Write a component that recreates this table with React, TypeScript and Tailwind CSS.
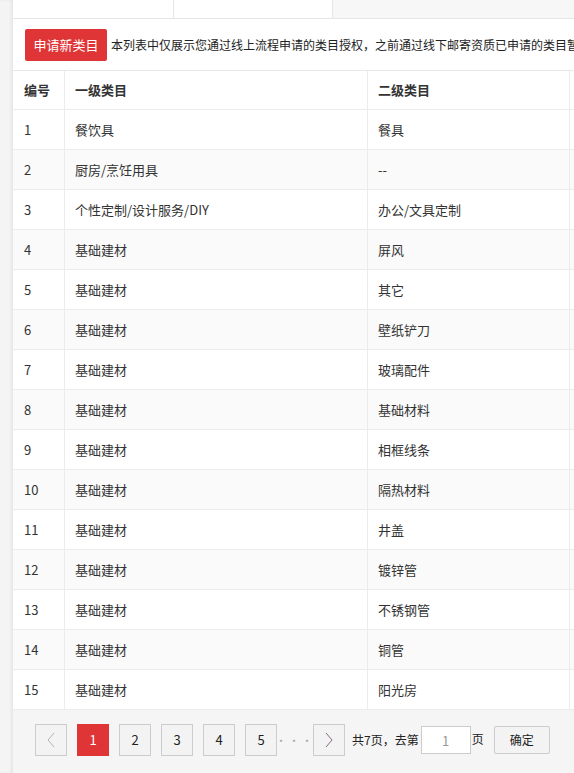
const rows: [number, string, string][] = [
  [1, "餐饮具", "餐具"],
  [2, "厨房/烹饪用具", "--"],
  [3, "个性定制/设计服务/DIY", "办公/文具定制"],
  [4, "基础建材", "屏风"],
  [5, "基础建材", "其它"],
  [6, "基础建材", "壁纸铲刀"],
  [7, "基础建材", "玻璃配件"],
  [8, "基础建材", "基础材料"],
  [9, "基础建材", "相框线条"],
  [10, "基础建材", "隔热材料"],
  [11, "基础建材", "井盖"],
  [12, "基础建材", "镀锌管"],
  [13, "基础建材", "不锈钢管"],
  [14, "基础建材", "铜管"],
  [15, "基础建材", "阳光房"],
];

const Chevron = ({ dir }: { dir: "left" | "right" }) => (
  <svg width="10" height="16" viewBox="0 0 10 16" fill="none">
    <polyline
      points={dir === "left" ? "8,1 2,8 8,15" : "2,1 8,8 2,15"}
      stroke={dir === "left" ? "#b5b5b5" : "#8a6a86"}
      strokeWidth="1"
    />
  </svg>
);

const App = () => {
  return (
    <div
      className="flex w-[574px] h-[773px] overflow-hidden bg-white text-[13px] text-[#333]"
      style={{ fontFamily: '"Noto Sans CJK SC", "Noto Sans", sans-serif' }}
    >
      <div className="w-[13px] shrink-0 bg-[#f4f4f4] shadow-[inset_-2px_0_3px_rgba(0,0,0,0.06)]"></div>
      <div className="flex-1 flex flex-col min-w-0">
        <div className="h-[19px] shrink-0 flex bg-[#f7f7f7] border-b border-[#e6e6e6]">
          <div className="w-[161px] bg-white border-r border-[#e6e6e6]"></div>
          <div className="w-[159px] bg-white border-r border-[#e6e6e6]"></div>
        </div>
        <div className="h-[52px] shrink-0 flex items-center pl-[12px] pt-[1px] gap-[4px] whitespace-nowrap overflow-hidden border-b border-[#e8e8e8]">
          <button className="h-[32px] w-[82px] shrink-0 rounded-[2px] bg-[#e03536] text-white text-[13px]">
            申请新类目
          </button>
          <span className="text-[12px] text-[#222]">
            本列表中仅展示您通过线上流程申请的类目授权，之前通过线下邮寄资质已申请的类目暂不在此展示
          </span>
        </div>
        <div className="flex-1 flex flex-col">
          <div className="flex h-[39px] shrink-0 border-b border-[#ececec] font-bold text-[#333] whitespace-nowrap">
            <div className="w-[52px] shrink-0 pl-[11px] flex items-center border-r border-[#ececec]">编号</div>
            <div className="w-[303px] shrink-0 pl-[10px] flex items-center border-r border-[#ececec]">一级类目</div>
            <div className="w-[202px] shrink-0 pl-[10px] flex items-center border-r border-[#ececec]">二级类目</div>
            <div className="flex-1"></div>
          </div>
          {rows.map(([n, a, b]) => (
            <div
              key={n}
              className={`flex h-[40px] shrink-0 border-b border-[#ececec] whitespace-nowrap ${n % 2 === 0 ? "bg-[#fafafa]" : "bg-white"}`}
            >
              <div className="w-[52px] shrink-0 pl-[11px] flex items-center border-r border-[#ececec]">{n}</div>
              <div className="w-[303px] shrink-0 pl-[10px] flex items-center border-r border-[#ececec]">{a}</div>
              <div className="w-[202px] shrink-0 pl-[10px] flex items-center border-r border-[#ececec]">{b}</div>
              <div className="flex-1"></div>
            </div>
          ))}
          <div className="flex-1 bg-[#f5f5f5] flex items-start pt-[14px] pl-[22px] whitespace-nowrap">
            <button className="w-[32px] h-[32px] border border-[#ccc] bg-[#f3f3f3] flex items-center justify-center">
              <Chevron dir="left" />
            </button>
            <button className="ml-[10px] w-[32px] h-[32px] bg-[#e03536] text-white flex items-center justify-center">1</button>
            {[2, 3, 4, 5].map((p) => (
              <button
                key={p}
                className="ml-[10px] w-[32px] h-[32px] border border-[#ccc] bg-[#f3f3f3] text-[#222] flex items-center justify-center"
              >
                {p}
              </button>
            ))}
            <span className="w-[36px] h-[32px] flex items-center justify-center text-[#aaa] text-[11px] tracking-[2px]">···</span>
            <button className="w-[32px] h-[32px] border border-[#ccc] bg-[#f3f3f3] flex items-center justify-center">
              <Chevron dir="right" />
            </button>
            <span className="ml-[7px] h-[32px] flex items-center text-[12px] text-[#222]">共7页，去第</span>
            <input
              readOnly
              value="1"
              className="ml-[2px] mt-[2px] w-[50px] h-[28px] border border-[#ccc] bg-white text-center text-[#999] outline-none"
            />
            <span className="ml-[1px] h-[30px] flex items-center text-[12px] text-[#222]">页</span>
            <button className="ml-[10px] mt-[2px] w-[56px] h-[28px] border border-[#ccc] rounded-[2px] bg-[#f3f3f3] text-[#222] text-[12px]">
              确定
            </button>
          </div>
        </div>
      </div>
    </div>
  );
};

export default App;
